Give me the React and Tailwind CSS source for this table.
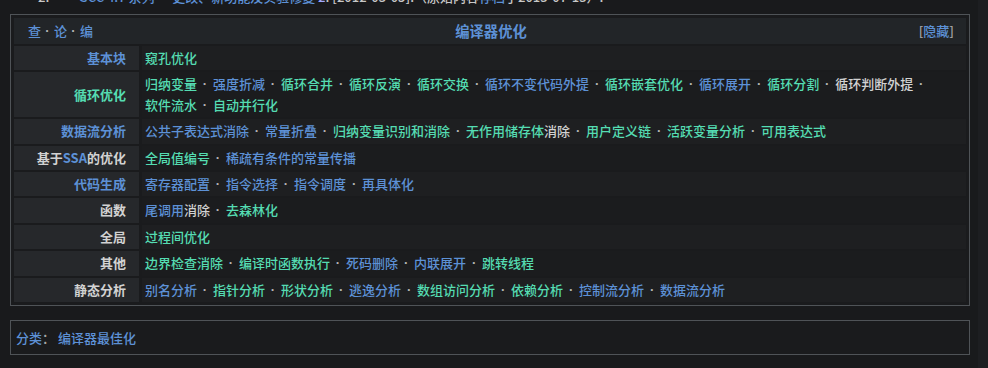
const BLUE = "text-[#5d91d6]";
const GREEN = "text-[#55dcb2]";
const GRAY = "text-[#d2d2d2]";

const ROWS = [
  {
    label: [["基本块", "b"]],
    items: [[["窥孔优化", "g"]]],
  },
  {
    label: [["循环优化", "g"]],
    items: [
      [["归纳变量", "g"]],
      [["强度折减", "b"]],
      [["循环合并", "g"]],
      [["循环反演", "g"]],
      [["循环交换", "g"]],
      [["循环不变代码外提", "b"]],
      [["循环嵌套优化", "g"]],
      [["循环展开", "b"]],
      [["循环分割", "g"]],
      [["循环判断外提", "w"]],
      [["软件流水", "g"]],
      [["自动并行化", "g"]],
    ],
  },
  {
    label: [["数据流分析", "b"]],
    items: [
      [["公共子表达式消除", "b"]],
      [["常量折叠", "b"]],
      [["归纳变量识别和消除", "g"]],
      [["无作用储存体", "g"], ["消除", "w"]],
      [["用户定义链", "g"]],
      [["活跃变量分析", "g"]],
      [["可用表达式", "g"]],
    ],
  },
  {
    label: [["基于", "w"], ["SSA", "b"], ["的优化", "w"]],
    items: [[["全局值编号", "g"]], [["稀疏有条件的常量传播", "b"]]],
  },
  {
    label: [["代码生成", "b"]],
    items: [
      [["寄存器配置", "b"]],
      [["指令选择", "b"]],
      [["指令调度", "b"]],
      [["再具体化", "b"]],
    ],
  },
  {
    label: [["函数", "w"]],
    items: [[["尾调用", "b"], ["消除", "w"]], [["去森林化", "g"]]],
  },
  {
    label: [["全局", "w"]],
    items: [[["过程间优化", "g"]]],
  },
  {
    label: [["其他", "w"]],
    items: [
      [["边界检查消除", "g"]],
      [["编译时函数执行", "g"]],
      [["死码删除", "b"]],
      [["内联展开", "b"]],
      [["跳转线程", "g"]],
    ],
  },
  {
    label: [["静态分析", "w"]],
    items: [
      [["别名分析", "b"]],
      [["指针分析", "g"]],
      [["形状分析", "g"]],
      [["逃逸分析", "b"]],
      [["数组访问分析", "g"]],
      [["依赖分析", "g"]],
      [["控制流分析", "b"]],
      [["数据流分析", "b"]],
    ],
  },
];

const tone = (c) => (c === "b" ? BLUE : c === "g" ? GREEN : GRAY);

function Pieces({ parts }) {
  return parts.map(([t, c], i) => (
    <span key={i} className={tone(c)}>
      {t}
    </span>
  ));
}

function Dot({ w = "w-[16px]" }) {
  return (
    <span
      className={`inline-block align-top h-[20.4px] leading-[20.4px] ${w} text-center font-bold text-[#b4b4b4]`}
      style={{ fontFamily: '"Liberation Sans", sans-serif' }}
    >
      ·
    </span>
  );
}

export default function App() {
  return (
    <div
      className="w-[988px] h-[368px] overflow-hidden flex bg-[#191a1c] text-[13px] font-medium"
      style={{ fontFamily: '"Noto Sans CJK SC", "Noto Sans", sans-serif' }}
    >
      <div className="w-[978px]">
        {/* tail of the reference line above, clipped */}
        <div className="h-[14px] overflow-hidden">
          <div className="-mt-[13px] leading-[20px] pl-[38px] text-[#c8c8c8] whitespace-nowrap">
            2. <span className="ml-[6px]">^</span>{" "}
            <span className={`ml-[10px] ${BLUE}`}>GCC 4.7 系列</span> —{" "}
            <span className={BLUE}>更改、新功能及实验修复</span>
            <span className="text-[#a0a8ff]"> 2</span>. [2012-03-05].（原始内容
            <span className={BLUE}>存档</span>于2013-07-13）.
          </div>
        </div>

        <div className="ml-[10px] w-[960px] border border-[#4f5357] p-[3px] bg-[#1a1b1d]">
          <div className="h-[26px] bg-[#222528] flex items-center px-[14px] leading-[20.4px]">
            <div className="w-[120px] flex items-center">
              <span className={BLUE}>查</span>
              <Dot w="w-[13px]" />
              <span className={BLUE}>论</span>
              <Dot w="w-[13px]" />
              <span className={BLUE}>编</span>
            </div>
            <div className={`flex-1 text-center font-bold text-[14.3px] ${BLUE}`}>编译器优化</div>
            <div className="w-[120px] text-right text-[#a8a8a8] mr-[-2px]">
              [<span className={BLUE}>隐藏</span>]
            </div>
          </div>

          <div className="flex flex-col gap-[2px] mt-[2px]">
            {ROWS.map((row, r) => (
              <div key={r} className="flex gap-[3px] leading-[20.4px]">
                <div className="w-[125px] shrink-0 bg-[#26282b] text-right pr-[13px] py-[2px] font-bold flex items-center justify-end">
                  <span>
                    <Pieces parts={row.label} />
                  </span>
                </div>
                <div
                  className={`flex-1 flex flex-wrap content-center pl-[3px] pr-[4px] py-[2px] ${
                    r % 2 === 0 ? "bg-[#1e1f21]" : "bg-[#1b1c1e]"
                  }`}
                >
                  {row.items.map((it, i) => (
                    <span key={i} className="whitespace-nowrap h-[20.4px]">
                      <Pieces parts={it} />
                      {i < row.items.length - 1 && <Dot />}
                    </span>
                  ))}
                </div>
              </div>
            ))}
          </div>
        </div>

        <div className="ml-[10px] mt-[14px] w-[960px] h-[35px] border border-[#4f5357] flex items-center pl-[5px] bg-[#1a1b1d]">
          <span className={BLUE}>分类</span>
          <span className="text-[#a8a8a8]">：</span>
          <span className={`ml-[3px] ${BLUE}`}>编译器最佳化</span>
        </div>
      </div>
      <div className="flex-1 bg-[#1d1e21]" />
    </div>
  );
}
